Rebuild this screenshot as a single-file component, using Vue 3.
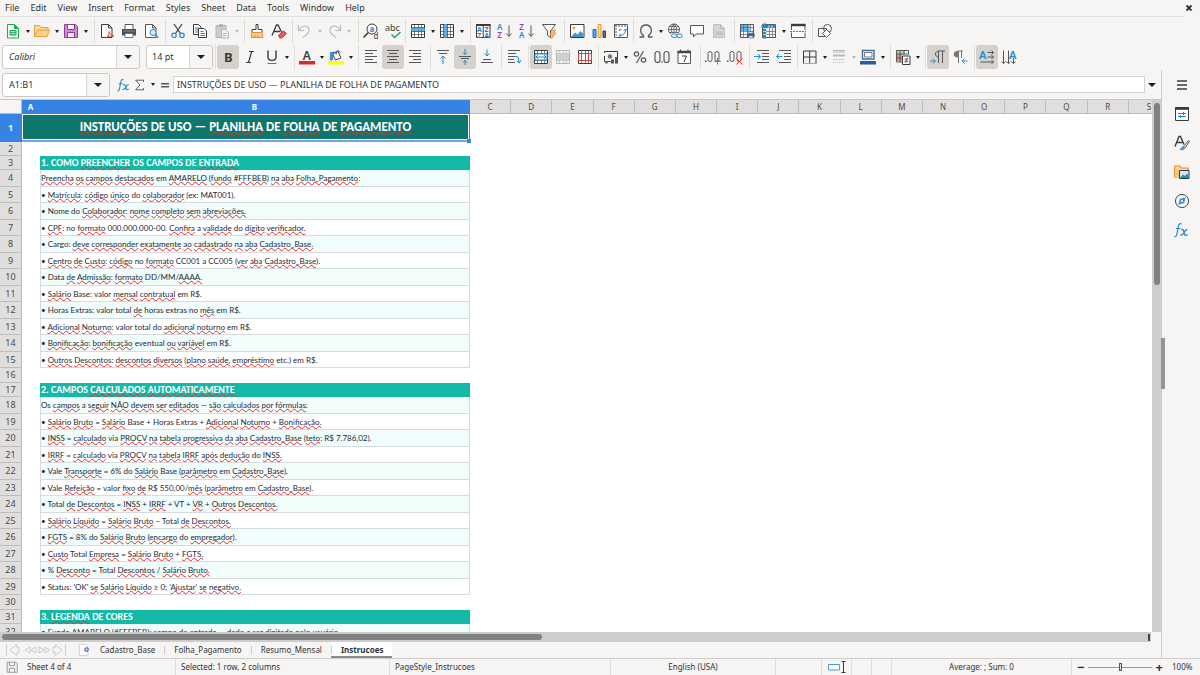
<script setup>
import { ref } from 'vue'

const menus = ['File', 'Edit', 'View', 'Insert', 'Format', 'Styles', 'Sheet', 'Data', 'Tools', 'Window', 'Help']

// Inner markup of each 16x16 toolbar icon.
const dark = '#3a3a38'
const table = (c) =>
  `<path d="M1.500 1.500h13v13h-13z" fill="none" stroke="${c}"/><path d="M1.500 4.500h13M1.500 8.500h13M1.500 11.500h13M4.500 1.500v13M8.500 1.500v13M11.500 1.500v13" fill="none" stroke="${c}" stroke-opacity=".7" stroke-width=".9"/>`
const lines = (list) => list.map(([x, y, w]) => `<path d="M${x} ${y}.5h${w}" stroke="#57575a"/>`).join('')

const icons = {
  new: `<path d="M2.500 1.500h7l4 4v9.500h-11z" fill="#fff" stroke="#18ab50"/><path d="M9.500 1.500v4h4z" fill="#18ab50" stroke="#18ab50"/><path d="M4.500 7h7v5.500h-7z" fill="#18ab50"/><path d="M5.500 8.700h5M5.500 10.700h5" stroke="#fff" stroke-width=".8"/>`,
  open: `<path d="M.5 13.500v-11h5l1.500 2h7v3" fill="#f9dd9e" stroke="#ed9a3b"/><path d="M.8 13.500l2.500-6.500h12.200l-2.500 6.500z" fill="#fbd28c" stroke="#ed9a3b"/>`,
  save: `<path d="M1.500 1.500h11l2 2v11h-13z" fill="#c98fd4" stroke="#92389f"/><path d="M4.500 1.500h7v5h-7z" fill="#fff" stroke="#92389f"/><path d="M4.500 9.500h7v5h-7z" fill="#f3e4f5" stroke="#92389f"/>`,
  pdf: `<path d="M2.500 1.500h7l3.500 3.500v9.500h-10.500z" fill="#fff" stroke="${dark}"/><path d="M9.500 1.500v3.500h3.500" fill="none" stroke="${dark}"/><path d="M7 15c2.500-2 3.500-4.500 3-6.500c1 3 2.500 4 5 4.800c-3-.8-5.500 0-8 1.700z" fill="none" stroke="#ed3d3b"/>`,
  print: `<path d="M4 6v-4.500h8v4.500" fill="#fff" stroke="#57575a"/><path d="M1 6h14v6.500h-14z" fill="#4d4d4f"/><path d="M2.500 8h11" stroke="#8b8b8b"/><path d="M4 10.500h8v4h-8z" fill="#fff" stroke="#2f8ad0"/>`,
  preview: `<path d="M2.500 1.500h7l3.500 3.500v9.500h-10.500z" fill="#fff" stroke="#57575a"/><path d="M9.500 1.500v3.500h3.500" fill="none" stroke="#57575a"/><circle cx="10" cy="9.500" r="3" fill="#d4ecfa" stroke="#2f8ad0"/><path d="M12.200 11.700l3 3" stroke="#2f8ad0" stroke-width="1.500"/>`,
  cut: `<path d="M4 1l6.500 9.500M12 1l-6.500 9.500" stroke="${dark}" stroke-width="1.200" fill="none"/><circle cx="4" cy="12.300" r="2.200" fill="none" stroke="#1e8bcd" stroke-width="1.200"/><circle cx="12" cy="12.300" r="2.200" fill="none" stroke="#1e8bcd" stroke-width="1.200"/>`,
  copy: `<path d="M1.500 1.500h5l2.500 2.500v7.500h-7.500z" fill="#fff" stroke="${dark}"/><path d="M3 5h4M3 7h3M3 9h3" stroke="#1e8bcd"/><path d="M6.500 5.500h5.500l2.500 2.500v6.500h-8z" fill="#fff" stroke="${dark}"/><path d="M8.500 8.500h3M8.500 10.500h4.500M8.500 12.500h4.500" stroke="#1e8bcd"/>`,
  paste: `<path d="M2 2.500h10v12h-10z" fill="#ccc" stroke="#b4b4b4"/><path d="M5 1.200h4v2.500h-4z" fill="#aaa"/><path d="M7.500 6.500h4l3 3v5.500h-7z" fill="#f2f2f2" stroke="#b4b4b4"/><path d="M9 10.500h3.500M9 12.500h3.500" stroke="#b4b4b4"/>`,
  brush: `<path d="M7 1.500h2v5h4v3h-10v-3h4z" fill="#fff" stroke="${dark}"/><path d="M3 9.500h10l.8 5h-11.600z" fill="#fbd28c" stroke="#ed8733"/><path d="M6 12v2.500M9 12v2.500" stroke="#ed8733"/>`,
  clear: `<path d="M1 12.500l4.500-10.500h1.500l4 8M3 8.500h6" fill="none" stroke="${dark}" stroke-width="1.300"/><path d="M7.500 12.500l5-4.500l3 2.500l-5 4.500h-1.500z" fill="#ed5a58" stroke="#cf2f2d"/>`,
  undo: `<path d="M1.500 2v5.500h5.500M2 7c2-4 6-5 8.500-3c3 2.500 2 6-4.500 10.500" fill="none" stroke="#b9b9b9" stroke-width="1.100"/>`,
  redo: `<path d="M14.500 2v5.500h-5.500M14 7c-2-4-6-5-8.500-3c-3 2.500-2 6 4.500 10.500" fill="none" stroke="#b9b9b9" stroke-width="1.100"/>`,
  find: `<circle cx="9" cy="6" r="5" fill="#fff" stroke="${dark}"/><path d="M5.300 9.500l-4.800 5" stroke="${dark}" stroke-width="1.600"/><text font-size="8"><tspan x="6.500" y="8.500" font-weight="700" fill="#1e8bcd">a</tspan><tspan x="10.500" y="15.800" fill="${dark}">d</tspan></text>`,
  spell: `<text x="0" y="8" font-size="9" fill="${dark}">abc</text><path d="M6.500 11.500l3 3l6-5.500" fill="none" stroke="#18ab50" stroke-width="1.400"/>`,
  rows: `<path d="M1.500 1.500h13v13h-13z" fill="#fff"/><path d="M1 4.500h14v4h-14z" fill="#62b1e8"/>${table(dark)}<path d="M1 5h14v3h-14z" fill="#62b1e8" fill-opacity=".75"/>`,
  cols: `<path d="M1.500 1.500h13v13h-13z" fill="#fff"/><path d="M4.500 1h4v14h-4z" fill="#62b1e8"/>${table(dark)}<path d="M5 1h3v14h-3z" fill="#62b1e8" fill-opacity=".75"/>`,
  sort: `<path d="M1.500 1.500h13.500v13h-13.500zM8.200 1.500v13" fill="#fff" stroke="${dark}"/><path d="M1 2h14.500" stroke="${dark}" stroke-width="2"/><text font-size="7" font-weight="700"><tspan x="2" y="8.800" fill="#1e8bcd">A</tspan><tspan x="9.400" y="8.800" fill="#9a3fae">Z</tspan><tspan x="2.200" y="14.500" fill="#9a3fae">Z</tspan><tspan x="9.200" y="14.500" fill="#1e8bcd">A</tspan></text>`,
  asc: `<text font-size="8" font-weight="600"><tspan x="0" y="7" fill="#1e8bcd">A</tspan><tspan x=".3" y="15" fill="#9a3fae">Z</tspan></text><path d="M12 2.500v11M9.500 10.500l2.500 3l2.500-3" fill="none" stroke="#57575a"/>`,
  desc: `<text font-size="8" font-weight="600"><tspan x=".3" y="7" fill="#9a3fae">Z</tspan><tspan x="0" y="15" fill="#1e8bcd">A</tspan></text><path d="M12 2.500v11M9.500 10.500l2.500 3l2.500-3" fill="none" stroke="#57575a"/>`,
  filter: `<path d="M1.500 1.500h13l-5 6.500v6.500l-3-2v-4.500z" fill="#fff" stroke="#57575a"/><path d="M11.500 7l-2.500 4.500h2.500l-1 4l4.500-5.500h-2.500l2-3z" fill="#fbc07c" stroke="#ed8733" stroke-width=".8"/>`,
  image: `<path d="M1.500 1.500h13.500v13h-13.500z" fill="#fff" stroke="${dark}"/><path d="M2 14l4-4.500l2.500 2l3-3.500l3 3v3z" fill="#3f97d8"/><circle cx="5" cy="5" r="1.500" fill="#f3a64f"/>`,
  chart: `<path d="M2 6.500h3v8h-3z" fill="#56a7e2" stroke="#1e6fb0"/><path d="M7 1.500h3v13h-3z" fill="#fbd28c" stroke="#ed9a3b"/><path d="M12 8h2.500v6.500h-2.500z" fill="#6a6a6a" stroke="#444"/>`,
  pivot: `<path d="M1.500 1.500h13v13h-13z" fill="#fff" stroke="#57575a"/><path d="M2 3h12.500M3 2v12.500" stroke="#8a8a8a" stroke-width="1.400" stroke-dasharray="2 1"/><path d="M6.500 12.500c4 0 6-2 6-6M10.500 8l2-2.200l2 2.200M8 10.500l-2 2l2 2M6.500 8v-1.500h2" fill="none" stroke="#1e8bcd"/>`,
  omega: `<path d="M1.500 14h4v-1.500c-4.500-3-3.500-10.500 2.500-10.500s7 7.500 2.500 10.500v1.500h4" fill="none" stroke="#57575a" stroke-width="1.300"/>`,
  link: `<circle cx="7" cy="6.500" r="5.500" fill="none" stroke="#57575a"/><path d="M1.500 6.500h11M2.500 3.500h9M2.500 9.500h9M7 1v11M7 1c-3.500 3-3.500 8 0 11M7 1c3.500 3 3.500 8 0 11" fill="none" stroke="#57575a" stroke-width=".8"/><path d="M4 10h13v6h-13z" fill="#f6f5f4"/><rect x="4.500" y="11" width="5.500" height="3.500" rx="1.700" fill="none" stroke="#1e8bcd"/><rect x="9.500" y="11" width="5.500" height="3.500" rx="1.700" fill="none" stroke="#1e8bcd"/>`,
  comment: `<path d="M1.500 2.500h13v8.500h-7.500l-2.500 3v-3h-3z" fill="#fff" stroke="#57575a"/>`,
  header: `<path d="M2.500 1.500h7l4 4v9h-11z" fill="#d6d6d6" stroke="#c0c0c0"/><path d="M9.500 1.500v4h4" fill="none" stroke="#b5b5b5"/><path d="M4.500 8.500h7v4h-7z" fill="#c4c4c4"/>`,
  printarea: `<path d="M1 1h9.500v7h-9.500z" fill="#62b1e8"/>${table('#57575a')}<path d="M8 10.500h7.500v3.500h-7.500z" fill="#4d4d4f"/><path d="M9.500 8.500h4.500v2h-4.500zM9.500 12.500h4.500v2.500h-4.500z" fill="#bfe0f6" stroke="#1e6fb0" stroke-width=".6"/>`,
  freeze: `${table('#57575a')}<path d="M3.500 .5v15M.5 3.500h14" stroke="#1e8bcd" stroke-width="3"/><path d="M2 5.500h3M2 8.500h3M2 11.500h3M8 2v3M11 2v3" stroke="#fff" stroke-width=".7"/>`,
  split: `<path d="M1.500 7v-5.500h13.500v5.500M1.500 9.500v5h13.500v-5" fill="#fff" stroke="#57575a"/><path d="M1 2h14.500" stroke="${dark}" stroke-width="2.400"/><path d="M0 8.500h16" stroke="#1e8bcd" stroke-dasharray="2 1"/>`,
  shapes: `<path d="M1.500 5.500h8v8h-8z" fill="none" stroke="#57575a"/><circle cx="10.500" cy="5.500" r="4" fill="none" stroke="#57575a"/><path d="M9.500 6.500l4 4l-4 4l-4-4z" fill="#fff" stroke="#57575a"/>`,
  bold: `<text x="4" y="13" font-size="13" font-weight="700" fill="${dark}">B</text>`,
  italic: `<path d="M7 2.500h5M4 13.500h5M9.700 2.500l-3.200 11" stroke="${dark}" stroke-width="1.200"/>`,
  underline: `<path d="M4 1.500v6.500c0 4.500 8 4.500 8 0v-6.500" fill="none" stroke="${dark}" stroke-width="1.400"/><path d="M3.500 14.500h9" stroke="#1e8bcd"/>`,
  color: `<text x="3.800" y="10.500" font-size="12" font-weight="600" fill="${dark}">A</text><path d="M0 12h16v3.500h-16z" fill="#d32d28"/>`,
  highlight: `<path d="M4 4l6-1.500l3 6.500l-5.500 2z" fill="#fff" stroke="${dark}"/><path d="M8 5.500c0-4 3-5 4-2" fill="none" stroke="${dark}"/><path d="M2.500 11v-7.500h5c-2 1-3 3-3 7.500z" fill="#3f97d8" stroke="#1e6fb0" stroke-width=".7"/><path d="M0 12h16v3.500h-16z" fill="#ffff0a"/>`,
  left: lines([[2, 1, 12], [2, 4, 8], [2, 7, 12], [2, 10, 8], [2, 13, 12]]),
  center: lines([[2, 1, 12], [4, 4, 8], [2, 7, 12], [4, 10, 8], [2, 13, 12]]),
  right: lines([[2, 1, 12], [6, 4, 8], [2, 7, 12], [6, 10, 8], [2, 13, 12]]),
  top: lines([[2, 1, 12], [4, 4, 8]]) + `<path d="M8 15v-8M5.500 9.500l2.500-2.500l2.500 2.500" fill="none" stroke="#1e8bcd"/>`,
  middle: lines([[2, 7, 12], [4, 9, 8]]) + `<path d="M8 0v5.500M6 3.500l2 2l2-2M8 16v-4.500M6 13.500l2-2l2 2" fill="none" stroke="#1e8bcd"/>`,
  bottom: lines([[4, 10, 8], [2, 13, 12]]) + `<path d="M8 .5v6.500M5.500 4.500l2.500 2.500l2.500-2.500" fill="none" stroke="#1e8bcd"/>`,
  wrap: lines([[2, 1, 12], [2, 4, 8], [2, 7, 6], [2, 10, 6], [2, 13, 7]]) + `<path d="M8 7.500h3c2 0 1.500 4.500 2 6M10.500 12l2.800 2l1.500-3" fill="none" stroke="#1e8bcd"/>`,
  merge: `<path d="M1.500 1.500h13v13h-13z" fill="#fff"/>${table(dark)}<path d="M2 5h12v6h-12z" fill="#fff" stroke="#1e8bcd"/><path d="M3 8h10M5 6l-2 2l2 2M11 6l2 2l-2 2" stroke="#1e8bcd" fill="none"/>`,
  mergecells: `${table('#b5b5b5')}<path d="M2 5h12v6h-12z" fill="#d0d0d0"/>`,
  unmerge: `<path d="M1.500 1.500h13v13h-13z" fill="#fff"/>${table(dark)}<path d="M1.500 4.500h13v7h-13zM4.500 4.500v7M8.500 4.500v7M11.500 4.500v7" fill="#fff" stroke="#d9403d"/>`,
  currency: `<path d="M1.500 4v-1.500h13v7M1.500 7v5.500h6" fill="none" stroke="${dark}"/><circle cx="7" cy="7.500" r="2.300" fill="#777"/><path d="M8 10.500h3v4h-3zM12 8h3v6.500h-3z" fill="#555"/><path d="M2 12.500h3v2h-3z" fill="#777"/>`,
  percent: `<circle cx="4.500" cy="5" r="2.200" fill="none" stroke="#57575a" stroke-width="1.200"/><circle cx="11.500" cy="11" r="2.200" fill="none" stroke="#57575a" stroke-width="1.200"/><path d="M11.500 2l-7 12" stroke="#57575a" stroke-width="1.200"/>`,
  number: `<rect x="1" y="2.500" width="5" height="11" rx="2.500" fill="none" stroke="#57575a" stroke-width="1.200"/><rect x="10" y="2.500" width="5" height="11" rx="2.500" fill="none" stroke="#57575a" stroke-width="1.200"/><path d="M7.300 13h1.400" stroke="#57575a" stroke-width="1.400"/>`,
  date: `<path d="M2 2.500h12.500v12h-12.500z" fill="#fff" stroke="#57575a"/><path d="M1.500 3h13.500" stroke="#444" stroke-width="2.500"/><path d="M4.500 .5v2M12 .5v2" stroke="#444"/><path d="M6 7h4.500l-2.500 6" fill="none" stroke="${dark}"/>`,
  adddec: `<rect x="3" y="2.500" width="4" height="10" rx="2" fill="none" stroke="#57575a"/><rect x="10" y="2.500" width="4" height="10" rx="2" fill="none" stroke="#57575a"/><path d="M0 12.200h1.500" stroke="#57575a" stroke-width="1.400"/><path d="M12.500 9v6.500M9.200 12.300h6.600" stroke="#1e8bcd"/>`,
  deldec: `<rect x="3" y="2.500" width="4" height="10" rx="2" fill="none" stroke="#57575a"/><rect x="10" y="2.500" width="4" height="10" rx="2" fill="none" stroke="#57575a"/><path d="M0 12.200h1.500" stroke="#57575a" stroke-width="1.400"/><path d="M9.500 9.500l6 6M15.500 9.500l-6 6" stroke="#ed3d3b"/>`,
  indent: lines([[3, 1, 12], [8, 4, 7], [8, 7, 7], [8, 10, 7], [3, 13, 12]]) + `<path d="M0 7.500h6.500M4 5l2.500 2.500l-2.500 2.500" fill="none" stroke="#1e8bcd"/>`,
  outdent: lines([[3, 1, 12], [8, 4, 7], [8, 7, 7], [8, 10, 7], [3, 13, 12]]) + `<path d="M6.500 7.500h-6M3 5l-2.500 2.500l2.500 2.500" fill="none" stroke="#1e8bcd"/>`,
  borders: `<path d="M1.500 14.500v-12.500h12.500v12.500M7.700 2v12M1.500 8h12.500" fill="none" stroke="${dark}"/><path d="M1 14.500h13.500" stroke="#ed9a3b"/>`,
  linestyle: `<path d="M2 1.500h12M2 3h12" stroke="#b9b9b9"/><path d="M2 6.500h12" stroke="#b9b9b9" stroke-width="2"/><path d="M2 10.500h12" stroke="#b9b9b9" stroke-dasharray="2 1"/><path d="M2 13.500h12" stroke="#b9b9b9" stroke-dasharray="1 1"/>`,
  bordercolor: `<path d="M2.500 1.500h11.500v8.500h-11.500z" fill="#fff" stroke="#3a6f9c" stroke-width="1.400"/><path d="M4.500 3.500h7.500v4.500h-7.500z" fill="none" stroke="#57575a" stroke-width=".8"/><path d="M0 12h16v3.500h-16z" fill="#1e5fa5"/>`,
  conditional: `<path d="M1 1h9v4h-9z" fill="#a7dcb0"/><path d="M1 5h6v7h-6z" fill="#ee8a87"/><path d="M1.500 1.500h12v4M1.500 1.500v11.500h5.500M1.500 5h12M1.500 9h5M5 1.500v11.500M9 1.500v4" fill="none" stroke="#57575a"/><path d="M7.500 7h7.500v8.500h-7.500z" fill="#fff" stroke="${dark}"/><path d="M9.500 10h3.700M9.500 12.300h3.700M12.500 8.700l-2.200 5" stroke="${dark}" stroke-width=".8"/>`,
  ltr: `<path d="M8.500 8c-4 0-4-6 0-6h6.500M8.500 2v12M12.500 2v12" fill="none" stroke="#57575a"/><path d="M0 12h5M3 9.500l2.500 2.500l-2.500 2.500" fill="none" stroke="#1e8bcd"/>`,
  rtl: `<path d="M5.500 8.500c-5 0-5-6.500 0-6.500h.5v6.500z" fill="#777"/><path d="M6 2h5M6.500 2v12M9.500 2v7" fill="none" stroke="#777"/><path d="M15.500 12h-5M12.500 9.500l-2.500 2.500l2.500 2.500" fill="none" stroke="#1e8bcd"/>`,
  horizontal: `<text x="0" y="9.500" font-size="11" font-weight="600" fill="#1e8bcd">A</text><path d="M8.500 3.500h6M12.500 1.500l2 2l-2 2M8.500 8h6M12.500 6l2 2l-2 2M1.500 13h13M12.500 11l2 2l-2 2" fill="none" stroke="#57575a"/>`,
  vertical: `<text x="8" y="9.500" font-size="11" font-weight="600" fill="#1e8bcd">A</text><path d="M2.500 1.500v13M.5 12.500l2 2l2-2M7.500 1.500v13M5.500 12.500l2 2l2-2M12.500 9v5.500M10.500 12.500l2 2l2-2" fill="none" stroke="#57575a"/>`,
  hamburger: `<path d="M3 4h10M3 8h10M3 12h10" stroke="${dark}" stroke-width="1.400"/>`,
  properties: `<path d="M1.500 1.500h13v13h-13z" fill="#fff" stroke="${dark}"/><path d="M1 2.500h14" stroke="${dark}" stroke-width="2.600"/><path d="M4 7.500h8M4 10.500h8M9.500 5.800v3.200M6.500 9v3" stroke="#1e8bcd"/>`,
  styles: `<path d="M1 11.500l4-10h1.500l3.500 8M2.800 7.500h5.500" fill="none" stroke="${dark}" stroke-width="1.400"/><path d="M9.500 11.500l5-6l1 .8l-4.500 6.500z" fill="#fff" stroke="${dark}" stroke-width=".9"/><path d="M5 14.500c2 0 2-3 4-3s3 3.500-1 3.800z" fill="#3f97d8"/>`,
  gallery: `<path d="M.7 13.500v-11.500h5l1.500 2h7v2" fill="#fbd9a6" stroke="#ed8733" stroke-width="1.200"/><path d="M1 5.500h4v8.500h-4z" fill="#fbc07c"/><path d="M5.500 6.500h9.500v8h-9.500z" fill="#cfe7f8" stroke="${dark}"/><path d="M6 14l3-3.500l2 1.500l2-2.500l1.500 2v2.500z" fill="#1e8bcd"/>`,
  navigator: `<circle cx="8" cy="8" r="6.500" fill="#fff" stroke="${dark}"/><path d="M11.800 4.200l-1.600 6l-6 1.600l1.600-6z" fill="#3f97d8"/><circle cx="8" cy="8" r="1" fill="#fff"/>`,
  fx: `<path d="M7.500 2c-2-1-2.800.5-3.200 2.500l-1.500 8c-.3 1.800-1.200 2.500-2.300 1.800M1.800 6.500h4.500" fill="none" stroke="#1e8bcd" stroke-width="1.200"/><path d="M7 8c2-1.500 2.500 0 3 2.500s1.500 4 3.500 2M13.500 7.800c-2-.8-2.500 1.500-3.500 3s-1.800 2.800-3.500 2" fill="none" stroke="#1e8bcd" stroke-width="1.300"/>`,
  sigma: `<path d="M12 4.500v-2h-9l5 5.500l-5 5.500h9v-2" fill="none" stroke="#57575a" stroke-width="1.100"/>`,
  equals: `<path d="M3.500 6.500h9M3.500 10h9" stroke="#57575a" stroke-width="1.800"/>`,
  docstate: `<path d="M2.500 2.500h10l1.500 1.500v10h-11.500zM5 2.500v4h6v-4M5 14v-4.500h6v4.500" fill="none" stroke="#8f8f8f"/>`
}

// [icon, accessible label, flags]: d = has a drop-down, p = pressed, x = disabled
const standardBar = [
  [['new', 'New', 'd'], ['open', 'Open', 'd'], ['save', 'Save', 'd']],
  [['pdf', 'Export as PDF'], ['print', 'Print'], ['preview', 'Print Preview']],
  [['cut', 'Cut'], ['copy', 'Copy'], ['paste', 'Paste', 'dx']],
  [['brush', 'Clone Formatting'], ['clear', 'Clear Formatting']],
  [['undo', 'Undo', 'dx'], ['redo', 'Redo', 'dx']],
  [['find', 'Find and Replace'], ['spell', 'Spelling']],
  [['rows', 'Row', 'd'], ['cols', 'Column', 'd']],
  [['sort', 'Sort'], ['asc', 'Sort Ascending'], ['desc', 'Sort Descending'], ['filter', 'AutoFilter']],
  [['image', 'Image'], ['chart', 'Chart'], ['pivot', 'Pivot Table']],
  [['omega', 'Special Character', 'd'], ['link', 'Hyperlink'], ['comment', 'Comment'], ['header', 'Headers and Footers', 'x']],
  [['printarea', 'Print Area'], ['freeze', 'Freeze', 'd'], ['split', 'Split Window']],
  [['shapes', 'Draw Functions']]
]

const formatBar = [
  [['bold', 'Bold', 'p'], ['italic', 'Italic'], ['underline', 'Underline', 'd']],
  [['color', 'Font Color', 'd'], ['highlight', 'Highlighting', 'd']],
  [['left', 'Align Left'], ['center', 'Center', 'p'], ['right', 'Align Right']],
  [['top', 'Align Top'], ['middle', 'Center Vertically', 'p'], ['bottom', 'Align Bottom']],
  [['wrap', 'Wrap Text']],
  [['merge', 'Merge and Center', 'p'], ['mergecells', 'Merge Cells', 'x'], ['unmerge', 'Unmerge Cells']],
  [['currency', 'Currency', 'd'], ['percent', 'Percent'], ['number', 'Number'], ['date', 'Date']],
  [['adddec', 'Add Decimal Place'], ['deldec', 'Delete Decimal Place']],
  [['indent', 'Increase Indent'], ['outdent', 'Decrease Indent']],
  [['borders', 'Borders', 'd'], ['linestyle', 'Border Style', 'dx'], ['bordercolor', 'Border Color', 'd']],
  [['conditional', 'Conditional', 'd']],
  [['ltr', 'Left-to-Right', 'p'], ['rtl', 'Right-to-Left']],
  [['horizontal', 'Text direction horizontal', 'p'], ['vertical', 'Text direction vertical']]
]

const sidebar = [
  ['hamburger', 'Sidebar Settings'],
  ['properties', 'Properties'],
  ['styles', 'Styles'],
  ['gallery', 'Gallery'],
  ['navigator', 'Navigator'],
  ['fx', 'Functions']
]

const columns = 'CDEFGHIJKLMNOPQRS'.split('')

// Words inside braces are unknown to the spelling checker.
const source = [
  ['title', '{INSTRUÇÕES} DE USO — {PLANILHA} DE {FOLHA} DE {PAGAMENTO}'],
  ['gap', ''],
  ['head', '1. COMO {PREENCHER} OS CAMPOS DE {ENTRADA}'],
  ['text', '{Preencha os campos destacados} em {AMARELO} ({fundo} #{FFFBEB}) {na aba Folha_Pagamento}:'],
  ['text', '• {Matrícula}: {código único} do {colaborador} (ex: MAT001).'],
  ['text', '• Nome do {Colaborador}: {nome completo sem abreviações.}'],
  ['text', '• {CPF}: no {formato} 000.000.000-00. {Confira} a {validade} do {dígito verificador.}'],
  ['text', '• Cargo: {deve corresponder exatamente ao cadastrado na aba Cadastro_Base.}'],
  ['text', '• {Centro de Custo}: {código} no {formato} CC001 a CC005 ({ver aba Cadastro_Base}).'],
  ['text', '• Data {de Admissão}: {formato} DD/MM/{AAAA.}'],
  ['text', '• {Salário} Base: valor {mensal contratual} em R$.'],
  ['text', '• Horas Extras: valor total {de} horas extras no {mês} em R$.'],
  ['text', '• {Adicional Noturno}: valor total do {adicional noturno} em R$.'],
  ['text', '• {Bonificação}: {bonificação} eventual {ou variável} em R$.'],
  ['text', '• {Outros Descontos}: {descontos diversos} ({plano saúde, empréstimo} etc.) em R$.'],
  ['gap', ''],
  ['head', '2. CAMPOS {CALCULADOS AUTOMATICAMENTE}'],
  ['text', 'Os {campos} a {seguir NÃO devem ser editados} — {são calculados por fórmulas}:'],
  ['text', '• {Salário Bruto} = {Salário} Base + Horas Extras + {Adicional Noturno} + {Bonificação.}'],
  ['text', '• {INSS} = {calculado} via {PROCV na tabela progressiva da aba Cadastro_Base} ({teto}: R$ 7.786,02).'],
  ['text', '• {IRRF} = {calculado} via {PROCV na tabela IRRF após dedução} do {INSS.}'],
  ['text', '• Vale {Transporte} = 6% do {Salário} Base ({parâmetro} em {Cadastro_Base}).'],
  ['text', '• Vale {Refeição} = valor {fixo de} R$ 550,00/{mês} ({parâmetro} em {Cadastro_Base}).'],
  ['text', '• Total {de Descontos} = {INSS} + {IRRF} + VT + {VR} + {Outros Descontos.}'],
  ['text', '• {Salário Líquido} = {Salário Bruto} − Total {de Descontos.}'],
  ['text', '• {FGTS} = 8% do {Salário Bruto} ({encargo} do {empregador}).'],
  ['text', '• {Custo} Total {Empresa} = {Salário Bruto} + {FGTS.}'],
  ['text', '• % {Desconto} = Total {Descontos} / {Salário Bruto.}'],
  ['text', "• Status: 'OK' {se Salário Líquido} ≥ 0; '{Ajustar}' {se negativo.}"],
  ['gap', ''],
  ['head', '3. {LEGENDA} DE CORES'],
  ['text', '• {Fundo AMARELO} (#{FFFBEB}): {campo de entrada} — {dado} a {ser digitado pelo usuário.}']
]

const parse = (text) =>
  text.split(/[{}]/).flatMap((part, i) =>
    i % 2 ? part.split(/( )/).map((t) => ({ t, bad: t !== ' ' })) : [{ t: part, bad: false }]
  )

const rows = source.map(([kind, text], i) => ({
  kind,
  n: i + 1,
  tall: i % 2 === 1,
  parts: parse(text)
}))

const tabs = ['Cadastro_Base', 'Folha_Pagamento', 'Resumo_Mensal', 'Instrucoes']
const activeTab = ref('Instrucoes')
const zoom = ref(100)
const nameBox = ref('A1:B1')
const fontName = ref('Calibri')
const fontSize = ref('14 pt')
const formula = ref('INSTRUÇÕES DE USO — PLANILHA DE FOLHA DE PAGAMENTO')
</script>

<template>
  <div class="app">
    <header class="menubar">
      <nav>
        <button v-for="m in menus" :key="m" type="button">{{ m }}</button>
      </nav>
      <button type="button" class="close" aria-label="Close document">
        <svg viewBox="0 0 8 8"><path d="M1.500 1.500l5 5M6.500 1.500l-5 5" stroke="#2e3436" stroke-width="1.800" /></svg>
      </button>
    </header>

    <div class="bar standard" role="toolbar" aria-label="Standard">
      <div v-for="(group, g) in standardBar" :key="g" class="group">
        <template v-for="[icon, label, flags = ''] in group" :key="icon">
          <button type="button" class="tool" :disabled="flags.includes('x')" :aria-label="label">
            <svg viewBox="0 0 16 16" v-html="icons[icon]"></svg>
          </button>
          <button v-if="flags.includes('d')" type="button" class="more" :disabled="flags.includes('x')" :aria-label="label + ' options'"></button>
        </template>
      </div>
    </div>

    <div class="bar format" role="toolbar" aria-label="Formatting">
      <div class="combos">
        <div class="combo font">
          <input v-model="fontName" aria-label="Font Name" />
          <button type="button" aria-label="Font list"></button>
        </div>
        <div class="combo size">
          <input v-model="fontSize" aria-label="Font Size" />
          <button type="button" aria-label="Size list"></button>
        </div>
      </div>
      <div v-for="(group, g) in formatBar" :key="g" class="group">
        <template v-for="[icon, label, flags = ''] in group" :key="icon">
          <button type="button" class="tool" :class="{ pressed: flags.includes('p') }" :disabled="flags.includes('x')" :aria-label="label">
            <svg viewBox="0 0 16 16" v-html="icons[icon]"></svg>
          </button>
          <button v-if="flags.includes('d')" type="button" class="more" :disabled="flags.includes('x')" :aria-label="label + ' options'"></button>
        </template>
      </div>
    </div>

    <div class="body">
      <main class="work">
        <div class="formulabar">
          <div class="combo name">
            <input v-model="nameBox" aria-label="Name Box" />
            <button type="button" aria-label="Range list"></button>
          </div>
          <div class="fxtools">
            <button type="button" aria-label="Function Wizard"><svg viewBox="0 0 16 16" v-html="icons.fx"></svg></button>
            <button type="button" aria-label="Select Function"><svg viewBox="0 0 16 16" v-html="icons.sigma"></svg></button>
            <button type="button" class="more" aria-label="Function list"></button>
            <button type="button" aria-label="Formula"><svg viewBox="0 0 16 16" v-html="icons.equals"></svg></button>
          </div>
          <input v-model="formula" class="formula" aria-label="Input line" />
          <button type="button" class="expand" aria-label="Expand Formula Bar"></button>
        </div>

        <div class="gridrow">
          <div class="grid">
            <table>
              <colgroup>
                <col class="c-head" />
                <col class="c-a" />
                <col class="c-b" />
                <col v-for="c in columns" :key="c" />
              </colgroup>
              <thead>
                <tr>
                  <th class="corner"></th>
                  <th class="sel">A</th>
                  <th class="sel">B</th>
                  <th v-for="c in columns" :key="c">{{ c }}</th>
                </tr>
              </thead>
              <tbody>
                <tr v-for="r in rows" :key="r.n" :class="[r.kind, { tall: r.tall }]">
                  <th :class="{ sel: r.n === 1 }">{{ r.n }}</th>
                  <td v-if="r.kind !== 'title'"></td>
                  <td class="cell" :colspan="r.kind === 'title' ? 2 : 1"><div class="line"><span v-for="(p, i) in r.parts" :key="i" :class="{ bad: p.bad }">{{ p.t }}</span></div></td>
                  <td :colspan="columns.length"></td>
                </tr>
              </tbody>
            </table>
          </div>
          <div class="vscroll"><div class="thumb"></div></div>
        </div>
        <div class="hscroll"><div class="thumb"></div><div class="split"></div></div>

        <div class="tabbar">
          <div class="navs">
            <svg viewBox="0 0 62 14" fill="none" stroke="#cfcdcb">
              <path d="M1.500 1.500v11M12 1.500l-7 5.500l7 5.500v-3h2v-5h-2zM25 4l-5 3l5 3zM31 4l-5 3l5 3zM34 4l5 3l-5 3zM40 4l5 3l-5 3zM50 1.500l7 5.500l-7 5.500v-3h-2v-5h2zM60.500 1.500v11" />
            </svg>
          </div>
          <button type="button" class="add" aria-label="Add Sheet">
            <svg viewBox="0 0 14 14"><path d="M1.500 .5h7l3 3v10h-10z" fill="#fff" stroke="#cfcdcb" /><circle cx="10" cy="6.500" r="2" fill="#d4e6f8" stroke="#2a5fb0" stroke-width="1.200" /></svg>
          </button>
          <button v-for="t in tabs" :key="t" type="button" class="tab" :class="{ active: t === activeTab }" @click="activeTab = t">{{ t }}</button>
        </div>
      </main>

      <div class="grip" aria-hidden="true"></div>
      <aside class="side">
        <button v-for="[icon, label] in sidebar" :key="icon" type="button" :aria-label="label">
          <svg viewBox="0 0 16 16" v-html="icons[icon]"></svg>
        </button>
      </aside>
    </div>

    <footer class="status">
      <div class="state"><svg viewBox="0 0 16 16" v-html="icons.docstate"></svg></div>
      <div>Sheet 4 of 4</div>
      <div>Selected: 1 row, 2 columns</div>
      <div>PageStyle_Instrucoes</div>
      <div class="mid">English (USA)</div>
      <div></div>
      <div class="mode">
        <svg viewBox="0 0 24 12"><path d="M1.500 3.500h11v5.500h-11z" fill="#fff" stroke="#4a9fd0" /><path d="M14.500 .5h4M16.500 .5v11M14.500 11.500h4" stroke="#3a3a38" /></svg>
      </div>
      <div></div>
      <div></div>
      <div class="mid">Average: ; Sum: 0</div>
      <div class="zoom">
        <button type="button" aria-label="Zoom Out">−</button>
        <input v-model="zoom" type="range" min="0" max="200" aria-label="Zoom" />
        <button type="button" aria-label="Zoom In">+</button>
      </div>
      <div class="percent">{{ zoom }}%</div>
    </footer>
  </div>
</template>

<style>
body {
  margin: 0;
  background: #f6f5f4;
}
</style>

<style scoped>
.app {
  display: flex;
  flex-direction: column;
  height: 100vh;
  overflow: hidden;
  background: #f6f5f4;
  color: #2e3436;
  font: 9px/12px "Noto Sans", sans-serif;
}
button,
input {
  font: inherit;
  color: inherit;
  border: 0;
  padding: 0;
  margin: 0;
  background: none;
  min-width: 0;
}
svg {
  display: block;
  width: 16px;
  height: 16px;
  overflow: visible;
}

.menubar {
  display: flex;
  justify-content: space-between;
  align-items: center;
  height: 16px;
  padding: 0 7px 0 5px;
}
.menubar nav {
  display: flex;
  gap: 11px;
}
.close svg {
  width: 8px;
  height: 8px;
}

.bar {
  display: grid;
  box-sizing: border-box;
  height: 27px;
}
.standard {
  grid-template-columns: 94px 71px 79px 48px 66px 47px 65px 94px 69px 101px 78px 1fr;
  border-top: 1px solid #e4e2e0;
  margin-right: 16px;
}
.format {
  grid-template-columns: 215px 79px 64px 72px 71px 27px 70px 102px 49px 48px 93px 35px 49px 1fr;
}
.group {
  display: flex;
  align-items: center;
  padding-left: 1px;
  border-left: 1px solid #e0dedb;
  margin: 2px 0;
}
.standard .group:first-child {
  border-color: transparent;
}
.tool {
  display: grid;
  place-items: center;
  width: 22px;
  height: 24px;
  border-radius: 3px;
}
.tool.pressed {
  background: #d5d1cd;
}
.more {
  display: grid;
  place-items: center;
  width: 7px;
  height: 24px;
}
.more::before,
.combo button::before,
.expand::before {
  content: "";
  border: 3px solid transparent;
  border-top: 3px solid #1c1c1c;
  border-bottom: 0;
}
.more::before {
  border-width: 3px 2px 0;
}
.more:disabled::before {
  border-top-color: #bbb;
}

.combos {
  display: flex;
  align-items: center;
  gap: 6px;
  padding-left: 2px;
}
.combo {
  display: flex;
  box-sizing: border-box;
  height: 24px;
  border: 1px solid #cdc7c2;
  border-radius: 3px;
  background: #fff;
  overflow: hidden;
}
.combo input {
  flex: 1;
  padding-left: 6px;
}
.combo button {
  display: grid;
  place-items: center;
  width: 23px;
  border-left: 1px solid #d9d5d1;
  background: #f6f5f4;
}
.combo button::before,
.expand::before {
  border-width: 4px 4px 0;
}
.combo.font {
  width: 138px;
}
.combo.font input {
  font-style: italic;
}
.combo.size {
  width: 67px;
}
.combo.size input {
  padding-left: 5px;
}
.combo.name {
  width: 108px;
}

.body {
  display: flex;
  flex: 1;
  min-height: 0;
}
.work {
  display: flex;
  flex-direction: column;
  flex: 1;
  min-width: 0;
  border-right: 1px solid #d0cecb;
}
.formulabar {
  display: flex;
  align-items: center;
  height: 29px;
  padding: 0 2px;
}
.fxtools {
  display: flex;
  align-items: center;
  margin-left: 6px;
}
.fxtools button:not(.more) {
  display: grid;
  place-items: center;
  width: 16px;
  height: 20px;
}
.fxtools .more {
  width: 9px;
}
.fxtools svg {
  width: 14px;
  height: 14px;
}
.formula {
  flex: 1;
  height: 17px;
  box-sizing: border-box;
  padding-left: 3px;
  background: #fff;
  border: 1px solid #d5d2cf;
}
.expand {
  display: grid;
  place-items: center;
  width: 14px;
}

.gridrow {
  display: flex;
  flex: 1;
  min-height: 0;
  border-top: 1px solid #c9c7c5;
}
.grid {
  flex: 1;
  min-width: 0;
  overflow: hidden;
  background: #fff;
}
table {
  table-layout: fixed;
  width: calc(100% + 18px);
  border-collapse: separate;
  border-spacing: 0;
}
.c-head {
  width: 22px;
}
.c-a {
  width: 18px;
}
.c-b {
  width: 430px;
}
th,
td {
  box-sizing: border-box;
  padding: 0;
}
th {
  background: #e0dfdd;
  border-right: 1px solid #bfbdbb;
  border-bottom: 1px solid #bfbdbb;
  color: #4a4a4a;
  font-size: 9px;
  font-weight: 400;
  line-height: 10px;
}
thead th {
  height: 14px;
  font-size: 8px;
}
.corner {
  background: #f6f5f4;
}
th.sel {
  background: #3584e4;
  border-color: #3584e4;
  color: #fff;
  font-weight: 700;
}
tr.title > * {
  height: 28px;
}
tr.gap > * {
  height: 14px;
}
tr.gap.tall + tr.head > * {
  height: 14px;
}
tr.head + tr.text > * {
  height: 17px;
}
tr.gap > *,
tr.head > * {
  height: 14px;
}
tr.text > * {
  height: 16px;
}
tr.text.tall > * {
  height: 17px;
}
tr.text + tr.gap > * {
  height: 15px;
}
.line {
  font-family: Lato, Carlito, sans-serif;
  white-space: nowrap;
  color: #1f2937;
  font-size: 8px;
  line-height: 12px;
}
.title .line,
.head .line {
  font-family: Carlito, Lato, sans-serif;
  font-weight: 700;
  color: #fff;
}
.title .line {
  font-size: 13px;
  line-height: 16px;
  text-align: center;
}
.title .cell {
  position: relative;
  background: #0f766e;
  background-clip: padding-box;
  box-shadow: inset 0 0 0 1px #fff;
  border-right: 1px solid #3584e4;
  border-bottom: 2px solid #6ea3e6;
}
.title .cell::after {
  content: "";
  position: absolute;
  right: -2px;
  bottom: -3px;
  width: 4px;
  height: 4px;
  background: #3584e4;
}
.head .line {
  font-size: 10px;
}
.head .cell {
  background: #14b8a6;
  padding-left: 1px;
}
.text .cell {
  border: 1px solid #d5dbe0;
  border-top: 0;
}
.text.tall .cell {
  background: #f0fdfa;
}
.bad {
  text-decoration: underline wavy #d9302b;
  text-decoration-thickness: 1px;
  text-decoration-skip-ink: none;
  text-underline-offset: 0;
}

.vscroll {
  width: 9px;
  background: #cdcdcd;
  padding-top: 3px;
}
.vscroll .thumb {
  width: 6px;
  height: 182px;
  margin: 0 auto;
  border-radius: 3px;
  background: #808080;
}
.hscroll {
  display: flex;
  align-items: center;
  justify-content: space-between;
  height: 10px;
  margin-right: 10px;
  padding-left: 2px;
  background: #cdcdcd;
}
.hscroll .thumb {
  width: 47%;
  height: 6px;
  border-radius: 3px;
  background: #808080;
}
.hscroll .split {
  width: 2px;
  height: 7px;
  margin-right: 1px;
  background: #444;
}

.tabbar {
  display: flex;
  height: 16px;
}
.navs {
  width: 78px;
  padding: 1px 0 0 5px;
  box-sizing: border-box;
}
.navs svg {
  width: 62px;
  height: 14px;
}
.add svg {
  width: 12px;
  height: 14px;
}
.tab {
  position: relative;
  padding: 0 9px 0 10px;
  font-size: 8px;
}
.tab + .tab::before {
  content: "";
  position: absolute;
  left: 0;
  top: 4px;
  height: 8px;
  border-left: 1px solid #ccc9c6;
}
.tab.active {
  background: #fff;
  font-weight: 700;
  box-shadow: inset 0 -2px #8a8a8a;
}

.grip {
  width: 4px;
  height: 51px;
  margin: 268px 0 0 -1px;
  background: #959595;
}
.side {
  display: flex;
  flex-direction: column;
  align-items: center;
  gap: 13px;
  box-sizing: border-box;
  width: 35px;
  padding: 7px 2px 0 0;
}

.status {
  display: grid;
  grid-template-columns: 22px 154px 214px 1fr 165px 46px 30px 20px 20px 180px 95px 33px;
  height: 16px;
  border-top: 1px solid #cfcdcb;
  font-size: 8px;
  line-height: 16px;
}
.status > div {
  padding-left: 5px;
  border-right: 1px solid #e2e0de;
  white-space: nowrap;
}
.status > .state,
.status > .zoom,
.status > .percent {
  border-color: transparent;
}
.status > .mid {
  padding: 0;
  text-align: center;
}
.state svg {
  width: 14px;
}
.mode svg {
  width: 24px;
  height: 12px;
  margin-top: 2px;
}
.status > .zoom {
  display: flex;
  align-items: center;
  justify-content: space-between;
  padding-right: 3px;
}
.zoom button {
  font-size: 13px;
  font-weight: 700;
  line-height: 14px;
}
.zoom input {
  appearance: none;
  width: 64px;
  height: 8px;
  background: linear-gradient(#999, #999) center / 100% 1px no-repeat;
}
.zoom input::-webkit-slider-thumb {
  appearance: none;
  box-sizing: border-box;
  width: 3px;
  height: 8px;
  border: 1px solid #555;
  background: #ddd;
}
</style>
